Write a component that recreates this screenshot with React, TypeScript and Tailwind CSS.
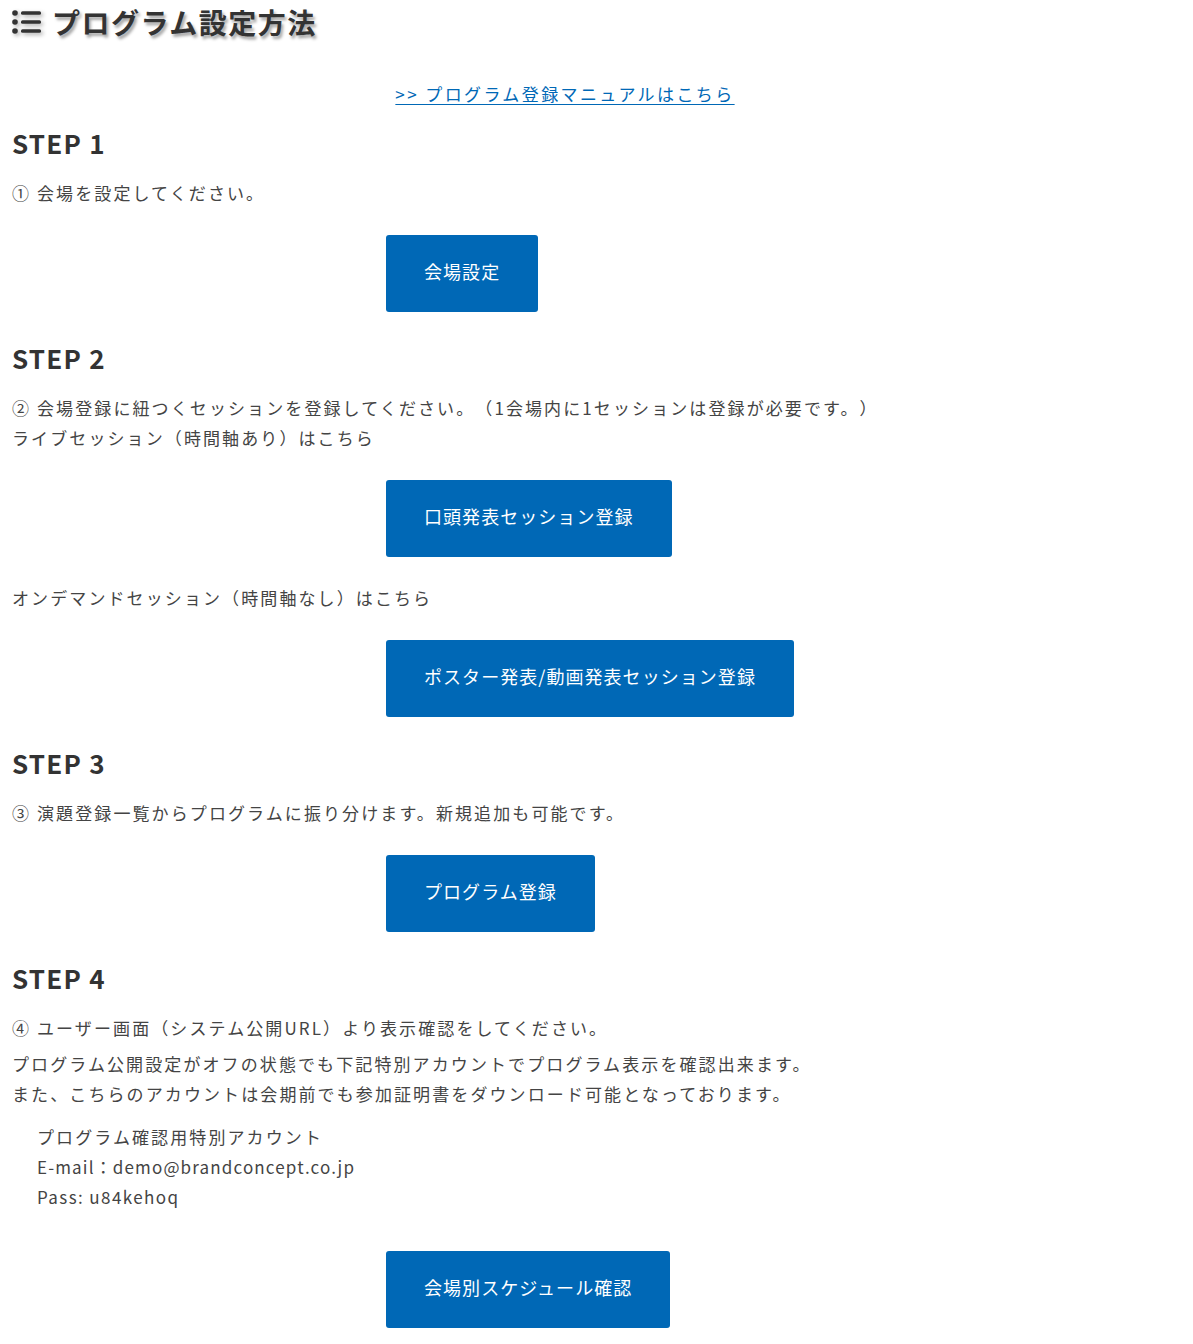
import React from "react";

const FONT = '"Noto Sans CJK JP", "Noto Sans", sans-serif';

function Btn({ children, mt = "mt-[27px]" }: { children: React.ReactNode; mt?: string }) {
  return (
    <div className={`${mt} pl-[374px]`}>
      <a className="inline-flex h-[77px] items-center rounded-[3px] bg-[#0068b6] px-[38px] pb-[4px] text-[18px] tracking-[1.05px] text-white">
        {children}
      </a>
    </div>
  );
}

function Step({ n, mt = "mt-[28px]" }: { n: number; mt?: string }) {
  return (
    <h2 className={`${mt} h-[36px] text-[26px] font-bold leading-[36px] tracking-[1.2px] text-[#333]`}>STEP {n}</h2>
  );
}

function P({ children, className = "" }: { children: React.ReactNode; className?: string }) {
  return (
    <p className={`text-[17px] leading-[30px] tracking-[2.1px] text-[#444] [text-spacing-trim:space-all] ${className}`}>
      {children}
    </p>
  );
}

export default function App() {
  return (
    <div className="w-[1118px] bg-white pb-[16px] pl-3" style={{ fontFamily: FONT }}>
      <div className="flex h-[44px] items-center gap-[10px]">
        <svg width="30" height="26" viewBox="0 0 30 26" className="[filter:drop-shadow(2px_2px_2px_rgba(0,0,0,0.35))]">
          <circle cx="3" cy="4" r="2.8" fill="#333" />
          <circle cx="3" cy="13" r="2.8" fill="#333" />
          <circle cx="3" cy="22" r="2.8" fill="#333" />
          <rect x="9" y="2.2" width="20" height="3.6" rx="1.5" fill="#333" />
          <rect x="9" y="11.2" width="20" height="3.6" rx="1.5" fill="#333" />
          <rect x="9" y="20.2" width="20" height="3.6" rx="1.5" fill="#333" />
        </svg>
        <h1 className="text-[28px] font-bold tracking-[1.5px] text-[#333] [text-shadow:2px_3px_3px_rgba(0,0,0,0.35)]">
          プログラム設定方法
        </h1>
      </div>

      <div className="mt-[35px] text-center">
        <a className="text-[17px] leading-[30px] tracking-[2.4px] text-[#0068b6] underline underline-offset-[3px]">
          &gt;&gt; プログラム登録マニュアルはこちら
        </a>
      </div>

      <Step n={1} mt="mt-[16px]" />
      <P className="mt-[17px]">① 会場を設定してください。</P>
      <Btn>会場設定</Btn>

      <Step n={2} />
      <P className="mt-[17px]">
        ② 会場登録に紐つくセッションを登録してください。（1会場内に1セッションは登録が必要です。）
        <br />
        ライブセッション（時間軸あり）はこちら
      </P>
      <Btn>口頭発表セッション登録</Btn>
      <P className="mt-[26px]">オンデマンドセッション（時間軸なし）はこちら</P>
      <Btn>ポスター発表/動画発表セッション登録</Btn>

      <Step n={3} />
      <P className="mt-[17px]">③ 演題登録一覧からプログラムに振り分けます。新規追加も可能です。</P>
      <Btn>プログラム登録</Btn>

      <Step n={4} />
      <P className="mt-[17px]">④ ユーザー画面（システム公開URL）より表示確認をしてください。</P>
      <P className="mt-[6px]">
        プログラム公開設定がオフの状態でも下記特別アカウントでプログラム表示を確認出来ます。
        <br />
        また、こちらのアカウントは会期前でも参加証明書をダウンロード可能となっております。
      </P>
      <P className="mt-[13px] pl-[25px]">
        プログラム確認用特別アカウント
        <br />
        <span className="tracking-[1.15px]">E-mail：demo@brandconcept.co.jp</span>
        <br />
        <span className="tracking-[1.4px]">Pass: u84kehoq</span>
      </P>
      <Btn mt="mt-[39px]">会場別スケジュール確認</Btn>
    </div>
  );
}
